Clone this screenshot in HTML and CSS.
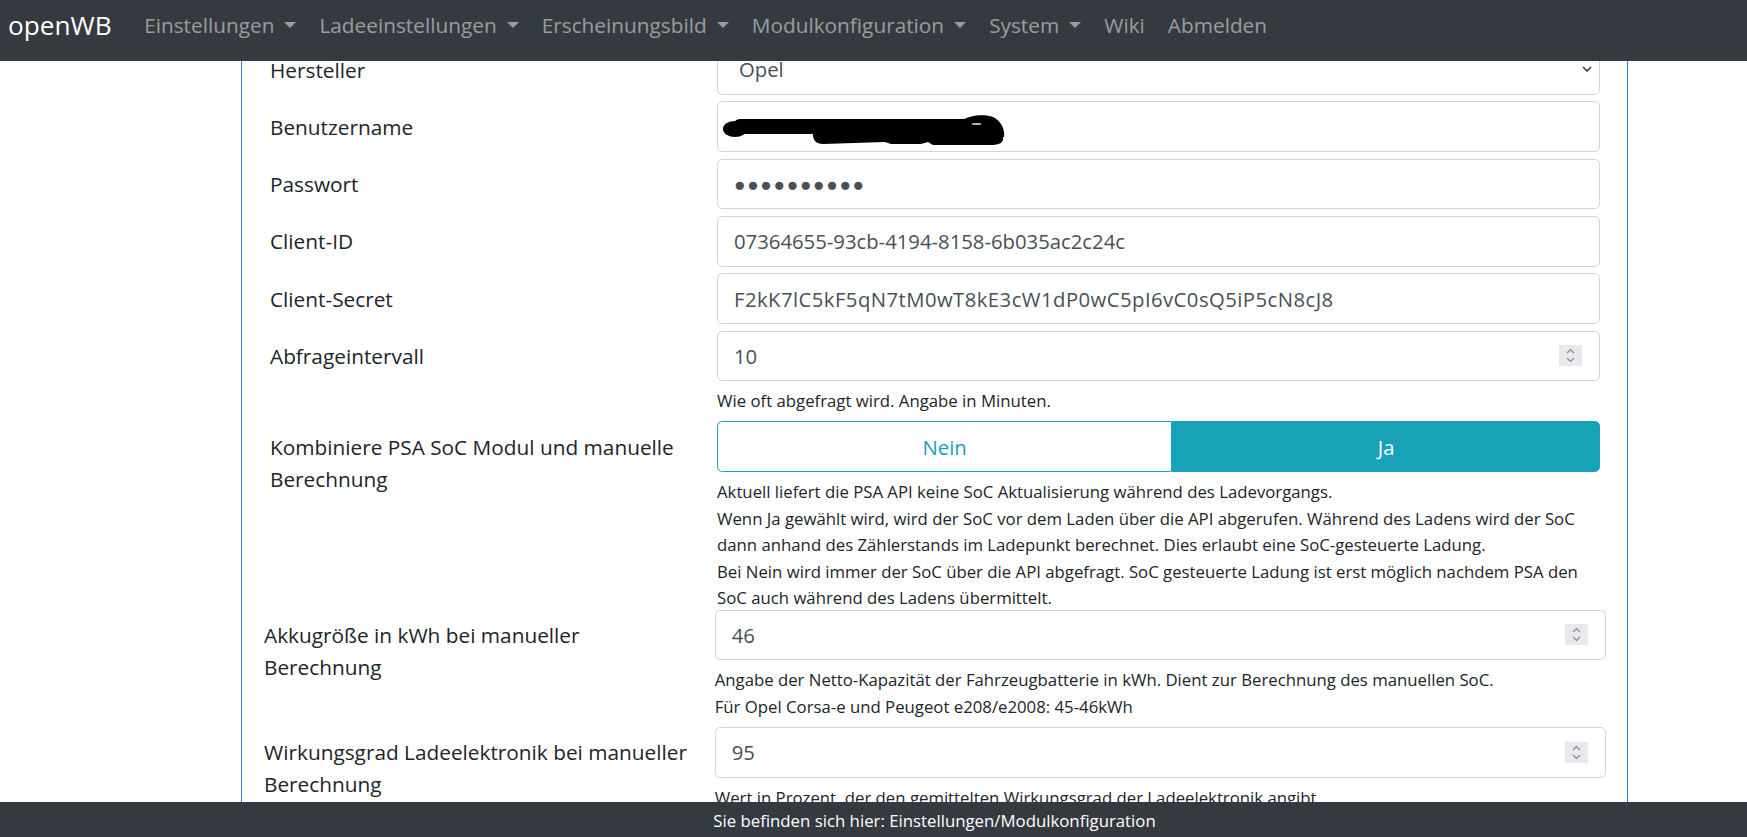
FILE: index.html
```html
<!DOCTYPE html>
<html lang="de">
<head>
<meta charset="utf-8">
<title>openWB – Modulkonfiguration</title>
<link rel="stylesheet" href="styles.css">
</head>
<body>
<div class="page">
  <nav class="navbar">
    <span class="brand">openWB</span>
    <ul class="nav">
      <li class="nav-link dropdown">Einstellungen</li>
      <li class="nav-link dropdown">Ladeeinstellungen</li>
      <li class="nav-link dropdown">Erscheinungsbild</li>
      <li class="nav-link dropdown">Modulkonfiguration</li>
      <li class="nav-link dropdown">System</li>
      <li class="nav-link">Wiki</li>
      <li class="nav-link">Abmelden</li>
    </ul>
  </nav>

  <main class="main">
    <div class="card">
      <div class="group group-psa">
        <div class="row">
          <label class="label">Hersteller</label>
          <div class="ctl">
            <div class="form-control select">
              <span class="select-value">Opel</span>
              <svg class="select-arrow" width="10" height="6" viewBox="0 0 10 6"><polyline points="1,1 5,5 9,1" fill="none" stroke="#3b3b3b" stroke-width="1.6"/></svg>
            </div>
          </div>
        </div>
        <div class="row">
          <label class="label">Benutzername</label>
          <div class="ctl">
            <div class="form-control">
              <svg class="scribble" width="284" height="31" viewBox="0 0 284 31">
                <ellipse cx="12" cy="14" rx="12" ry="8" fill="#000"/>
                <rect x="10" y="4" width="240" height="15" rx="7" fill="#000"/>
                <path d="M90 15 L262 15 L280 22 C281 28 276 30 268 30 L210 30 L205 27 L198 29 L168 29 L162 27 L100 29 C92 29 89 24 90 15 Z" fill="#000"/>
                <path d="M238 6 C246 0 262 -1 270 2 C278 6 282 14 281 22 L250 20 Z" fill="#000"/>
                <path d="M250 9 L257 9" stroke="#b5b5b5" stroke-width="2" stroke-linecap="round"/>
              </svg>
            </div>
          </div>
        </div>
        <div class="row">
          <label class="label">Passwort</label>
          <div class="ctl">
            <div class="form-control"><span class="dots">●●●●●●●●●●</span></div>
          </div>
        </div>
        <div class="row">
          <label class="label">Client-ID</label>
          <div class="ctl">
            <div class="form-control"><span>07364655-93cb-4194-8158-6b035ac2c24c</span></div>
          </div>
        </div>
        <div class="row">
          <label class="label">Client-Secret</label>
          <div class="ctl">
            <div class="form-control"><span class="secret">F2kK7lC5kF5qN7tM0wT8kE3cW1dP0wC5pI6vC0sQ5iP5cN8cJ8</span></div>
          </div>
        </div>
        <div class="row">
          <label class="label">Abfrageintervall</label>
          <div class="ctl">
            <div class="form-control number">
              <span>10</span>
              <span class="spin"><svg width="23" height="21" viewBox="0 0 23 21"><polyline points="8,8 11.5,4.5 15,8" fill="none" stroke="#8a8a8e" stroke-width="1.2"/><polyline points="8,13 11.5,16.5 15,13" fill="none" stroke="#8a8a8e" stroke-width="1.2"/></svg></span>
            </div>
            <div class="help">Wie oft abgefragt wird. Angabe in Minuten.</div>
          </div>
        </div>
        <div class="row last">
          <label class="label">Kombiniere PSA SoC Modul und manuelle<br>Berechnung</label>
          <div class="ctl">
            <div class="btn-group">
              <span class="btn btn-off">Nein</span>
              <span class="btn btn-on">Ja</span>
            </div>
            <div class="help">Aktuell liefert die PSA API keine SoC Aktualisierung während des Ladevorgangs.<br>Wenn Ja gewählt wird, wird der SoC vor dem Laden über die API abgerufen. Während des Ladens wird der SoC<br>dann anhand des Zählerstands im Ladepunkt berechnet. Dies erlaubt eine SoC-gesteuerte Ladung.<br>Bei Nein wird immer der SoC über die API abgefragt. SoC gesteuerte Ladung ist erst möglich nachdem PSA den<br>SoC auch während des Ladens übermittelt.</div>
          </div>
        </div>
      </div>

      <div class="group group-manual">
        <div class="row">
          <label class="label">Akkugröße in kWh bei manueller<br>Berechnung</label>
          <div class="ctl">
            <div class="form-control number">
              <span>46</span>
              <span class="spin"><svg width="23" height="21" viewBox="0 0 23 21"><polyline points="8,8 11.5,4.5 15,8" fill="none" stroke="#8a8a8e" stroke-width="1.2"/><polyline points="8,13 11.5,16.5 15,13" fill="none" stroke="#8a8a8e" stroke-width="1.2"/></svg></span>
            </div>
            <div class="help">Angabe der Netto-Kapazität der Fahrzeugbatterie in kWh. Dient zur Berechnung des manuellen SoC.<br>Für Opel Corsa-e und Peugeot e208/e2008: 45-46kWh</div>
          </div>
        </div>
        <div class="row">
          <label class="label">Wirkungsgrad Ladeelektronik bei manueller<br>Berechnung</label>
          <div class="ctl">
            <div class="form-control number">
              <span>95</span>
              <span class="spin"><svg width="23" height="21" viewBox="0 0 23 21"><polyline points="8,8 11.5,4.5 15,8" fill="none" stroke="#8a8a8e" stroke-width="1.2"/><polyline points="8,13 11.5,16.5 15,13" fill="none" stroke="#8a8a8e" stroke-width="1.2"/></svg></span>
            </div>
            <div class="help">Wert in Prozent, der den gemittelten Wirkungsgrad der Ladeelektronik angibt.</div>
          </div>
        </div>
      </div>
    </div>
  </main>

  <footer class="footer">Sie befinden sich hier: Einstellungen/Modulkonfiguration</footer>
</div>
</body>
</html>
```

FILE: styles.css
```css
* { box-sizing: border-box; }

html, body {
  margin: 0;
  padding: 0;
  background: #fff;
}

body {
  font-family: "Open Sans", "Noto Sans", sans-serif;
  color: #212529;
  font-size: 20.8px;
}

.page {
  height: 837px;
  display: flex;
  flex-direction: column;
  overflow: hidden;
}

/* ---------- navbar ---------- */
.navbar {
  flex: none;
  height: 61px;
  background: #343a40;
  display: flex;
  align-items: flex-start;
  padding-left: 8px;
}

.brand {
  color: #fff;
  font-size: 26.2px;
  line-height: 38px;
  margin-top: 6px;
  margin-right: 21px;
}

.nav {
  list-style: none;
  margin: 0;
  padding: 0;
  display: flex;
  margin-top: 9px;
}

.nav-link {
  color: rgba(255, 255, 255, 0.5);
  font-size: 20.8px;
  line-height: 32px;
  padding: 0 11.5px;
  white-space: nowrap;
}

.dropdown::after {
  content: "";
  display: inline-block;
  margin-left: 10px;
  vertical-align: 5px;
  border-top: 6px solid;
  border-left: 6px solid transparent;
  border-right: 6px solid transparent;
}

/* ---------- main / card ---------- */
.main {
  flex: 1;
  overflow: hidden;
}

.card {
  margin-left: 241px;
  width: 1387px;
  height: 900px;
  margin-top: -17px;
  border-left: 1px solid #2e7fd0;
  border-right: 1px solid #2e7fd0;
  padding-left: 28px;
}

.row {
  display: grid;
  margin-bottom: 6.67px;
}

.row.last { margin-bottom: 0; }

.group-psa .row {
  grid-template-columns: 442px 883px;
  column-gap: 5px;
}

.group-manual {
  margin-left: -6px;
  margin-top: -2px;
}

.group-manual .row {
  grid-template-columns: 430px 891px;
  column-gap: 20.7px;
}

.label {
  padding-top: 9.5px;
  line-height: 32px;
  white-space: nowrap;
}

.ctl { min-width: 0; }

.form-control {
  height: 50.67px;
  border: 1px solid #ced4da;
  border-radius: 5.33px;
  padding: 0 17px 0 16px;
  display: flex;
  align-items: center;
  color: #495057;
  font-size: 20.3px;
  white-space: nowrap;
  overflow: hidden;
}

.select { padding-left: 21px; padding-right: 7px; }
.select-arrow { margin-left: auto; }

.secret { letter-spacing: 0.45px; }

.scribble {
  align-self: flex-start;
  margin-top: 13px;
  margin-left: -11px;
}

.dots {
  letter-spacing: 1.7px;
  font-size: 19px;
}

.spin {
  margin-left: auto;
  width: 23px;
  height: 21px;
  background: #e9e9ed;
  display: flex;
}

.help {
  margin-top: 7px;
  font-size: 16.75px;
  line-height: 26.5px;
  color: #212529;
  white-space: nowrap;
}

/* ---------- toggle ---------- */
.btn-group {
  display: flex;
  height: 50.67px;
}

.btn {
  flex: 1 1 auto;
  display: flex;
  align-items: center;
  justify-content: center;
  padding: 0 16px;
  border: 1px solid #17a2b8;
  font-size: 20.3px;
}

.btn-off {
  color: #17a2b8;
  background: #fff;
  border-radius: 5.33px 0 0 5.33px;
}

.btn-on {
  color: #fff;
  background: #17a2b8;
  border-radius: 0 5.33px 5.33px 0;
}

/* ---------- footer ---------- */
.footer {
  flex: none;
  height: 35px;
  background: #343a40;
  color: #fff;
  font-size: 16.8px;
  line-height: 38px;
  text-align: center;
  padding-left: 122px;
}
```
